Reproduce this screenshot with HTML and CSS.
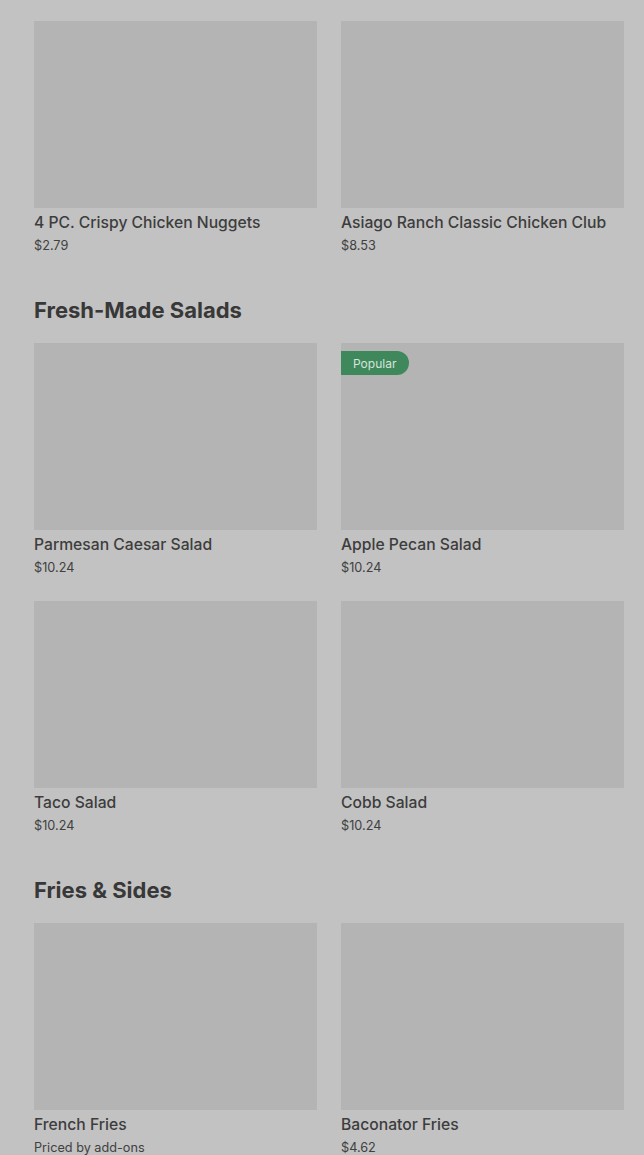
FILE: index.html
```html
<!DOCTYPE html>
<html lang="en">
<head>
<meta charset="utf-8">
<link rel="stylesheet" href="styles.css">
</head>
<body>
<main class="menu">
  <section class="section first">
    <div class="grid">
      <div class="card"><div class="thumb"></div><div class="name">4 PC. Crispy Chicken Nuggets</div><div class="price">$2.79</div></div>
      <div class="card"><div class="thumb"></div><div class="name">Asiago Ranch Classic Chicken Club</div><div class="price">$8.53</div></div>
    </div>
  </section>
  <section class="section">
    <h2 class="heading">Fresh-Made Salads</h2>
    <div class="grid">
      <div class="card"><div class="thumb"></div><div class="name">Parmesan Caesar Salad</div><div class="price">$10.24</div></div>
      <div class="card"><div class="thumb"><span class="badge">Popular</span></div><div class="name">Apple Pecan Salad</div><div class="price">$10.24</div></div>
      <div class="card"><div class="thumb"></div><div class="name">Taco Salad</div><div class="price">$10.24</div></div>
      <div class="card"><div class="thumb"></div><div class="name">Cobb Salad</div><div class="price">$10.24</div></div>
    </div>
  </section>
  <section class="section">
    <h2 class="heading">Fries &amp; Sides</h2>
    <div class="grid">
      <div class="card"><div class="thumb"></div><div class="name">French Fries</div><div class="price">Priced by add-ons</div></div>
      <div class="card"><div class="thumb"></div><div class="name">Baconator Fries</div><div class="price">$4.62</div></div>
    </div>
  </section>
</main>
</body>
</html>
```
FILE: styles.css
```css
html, body {
  margin: 0;
  padding: 0;
  background: #c2c2c2;
  font-family: Inter, "Noto Sans", sans-serif;
  color: #3b3b3b;
}
.menu {
  padding: 21px 20px 0 34px;
}
.section + .section {
  margin-top: 41px;
}
.heading {
  margin: 0 0 19px;
  font-size: 22px;
  line-height: 28px;
  font-weight: 700;
  letter-spacing: 0;
  color: #383838;
}
.grid {
  display: grid;
  grid-template-columns: 283px 283px;
  column-gap: 24px;
  row-gap: 24px;
}
.thumb {
  position: relative;
  height: 187px;
  background: #b4b4b4;
}
.badge {
  position: absolute;
  left: 0;
  top: 8px;
  height: 24px;
  padding: 0 13px 0 12px;
  display: flex;
  align-items: center;
  background: #3e885c;
  color: #d6e4db;
  font-size: 12px;
  border-radius: 0 12px 12px 0;
}
.name {
  margin-top: 5px;
  font-size: 15.7px;
  line-height: 20px;
  font-weight: 500;
  color: #3d3d3d;
  white-space: nowrap;
}
.price {
  margin-top: 4px;
  font-size: 12.7px;
  line-height: 18px;
  color: #404040;
}
```
